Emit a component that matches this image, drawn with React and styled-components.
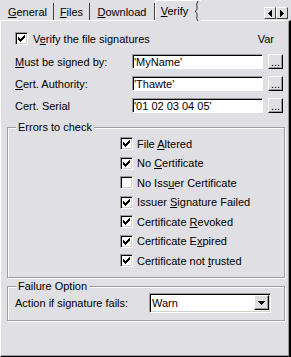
import React from 'react';
import styled, { createGlobalStyle } from 'styled-components';

const face = '#e0dfe3';
const shadow = '#9d9da1';

const GlobalStyle = createGlobalStyle`
  html, body {
    margin: 0;
    padding: 0;
    background: ${face};
  }
  body {
    font-family: "Liberation Sans", Arial, sans-serif;
    font-size: 11px;
    color: #000;
  }
`;

const Window = styled.div`
  width: 291px;
  height: 357px;
  display: flex;
  flex-direction: column;
  background: ${face};
`;

const TabBar = styled.div`
  position: relative;
  z-index: 1;
  display: flex;
  align-items: flex-end;
  height: 20px;
  padding: 0 3px 0 2px;
`;

const Tab = styled.div`
  box-sizing: border-box;
  width: ${p => p.$w}px;
  height: 17px;
  display: flex;
  align-items: center;
  justify-content: center;
  border-right: 1px solid #404040;
  line-height: 13px;
  padding-top: 2px;
`;

const ActiveTab = styled.div`
  box-sizing: border-box;
  width: ${p => p.$w}px;
  height: 21px;
  margin-bottom: -1px;
  display: flex;
  align-items: stretch;
  background: ${face};
  border-left: 1px solid #fff;
  border-top: 1px solid #fff;
`;

const ActiveLabel = styled.span`
  flex: 1;
  display: flex;
  align-items: center;
  justify-content: center;
  padding-bottom: 1px;
`;

const Scrollers = styled.div`
  display: flex;
  align-self: flex-start;
  margin: 7px 0 0 auto;
`;

const ScrollButton = styled.div`
  box-sizing: border-box;
  width: 12px;
  height: 12px;
  display: flex;
  align-items: center;
  justify-content: center;
  background: ${face};
  border: 1px solid;
  border-color: #fff #404040 #404040 #fff;
`;

const Panel = styled.div`
  flex: 1;
  box-sizing: border-box;
  display: flex;
  flex-direction: column;
  border-top: 1px solid #fff;
  border-left: 1px solid #fff;
  border-right: 2px solid #000;
  border-bottom: 1px solid #000;
  box-shadow: inset -1px -1px 0 ${shadow};
  padding: 11px 4px 0 6px;
`;

const HeaderRow = styled.div`
  display: flex;
  align-items: center;
  justify-content: space-between;
  height: 13px;
  margin-left: 8px;
  margin-right: 11px;
`;

const CheckRow = styled.div`
  display: flex;
  align-items: center;
  gap: ${p => p.$gap || 4}px;
  height: ${p => p.$h || 13}px;
  white-space: nowrap;
`;

const Box = styled.span`
  box-sizing: border-box;
  flex: none;
  width: 13px;
  height: 13px;
  display: flex;
  align-items: center;
  justify-content: center;
  background: #fff;
  border: 1px solid;
  border-color: ${shadow} #fff #fff ${shadow};
  box-shadow: inset 1px 1px 0 #000, inset -1px -1px 0 #d4d0c8;
`;

const Fields = styled.div`
  display: grid;
  grid-template-columns: 112px 131px 15px;
  grid-auto-rows: 15px;
  column-gap: 5px;
  row-gap: 7px;
  align-items: center;
  margin: 9px 0 0 8px;
`;

const FieldLabel = styled.span`
  white-space: nowrap;
`;

const TextBox = styled.input`
  box-sizing: border-box;
  width: 100%;
  height: 15px;
  margin: 0;
  padding: 0 0 0 1px;
  font: inherit;
  line-height: 12px;
  color: #000;
  background: #fff;
  border: 1px solid;
  border-color: ${shadow} #fff #fff ${shadow};
  box-shadow: inset 1px 1px 0 #000;
  outline: none;
`;

const DotsButton = styled.button`
  box-sizing: border-box;
  width: 15px;
  height: 15px;
  margin: 0;
  padding: 0 0 1px;
  display: flex;
  align-items: flex-end;
  justify-content: center;
  font: inherit;
  line-height: 9px;
  background: ${face};
  border: 1px solid;
  border-color: #fff #000 #000 #fff;
  box-shadow: inset -1px -1px 0 ${shadow};
`;

const Group = styled.fieldset`
  margin: ${p => p.$mt}px 0 0;
  padding: 0 0 ${p => p.$pb}px;
  min-width: 0;
  border: 1px solid ${shadow};
  box-shadow: inset 1px 1px 0 #fff, 1px 1px 0 #fff;
`;

const Legend = styled.legend`
  margin-left: 8px;
  padding: 0 2px;
  line-height: 13px;
  background: ${face};
`;

const CheckList = styled.div`
  display: flex;
  flex-direction: column;
  padding-left: 112px;
`;

const ActionRow = styled.div`
  display: grid;
  grid-template-columns: 134px 122px;
  align-items: center;
  height: 20px;
  padding-left: 7px;
`;

const Select = styled.div`
  box-sizing: border-box;
  height: 20px;
  display: flex;
  align-items: center;
  justify-content: space-between;
  padding: 0 1px;
  background: #fff;
  border: 1px solid;
  border-color: ${shadow} #fff #fff ${shadow};
  box-shadow: inset 1px 1px 0 #000, inset -1px -1px 0 #d4d0c8;
`;

const SelectValue = styled.span`
  padding-left: 1px;
`;

const DropButton = styled.span`
  box-sizing: border-box;
  width: 15px;
  height: 15px;
  display: flex;
  align-items: center;
  justify-content: center;
  background: ${face};
  border: 1px solid;
  border-color: #fff #000 #000 #fff;
  box-shadow: inset -1px -1px 0 ${shadow};
`;

const Check = ({ on }) => (
  <Box>
    {on && (
      <svg width="7" height="7" viewBox="0 0 7 7" shapeRendering="crispEdges">
        <path
          d="M0 2h1v3H0z M1 3h1v3H1z M2 4h1v3H2z M3 3h1v3H3z M4 2h1v3H4z M5 1h1v3H5z M6 0h1v3H6z"
          fill="#000"
        />
      </svg>
    )}
  </Box>
);

const Wave = () => (
  <svg width="8" height="20" viewBox="0 0 8 20">
    <path
      d="M5 0 Q3 3 4 6 Q5 9 2 10.5 Q5 12 4 15 Q3 18 5 20"
      fill="none"
      stroke="#303030"
      strokeWidth="1"
    />
  </svg>
);

const items = [
  { label: <>File <u>A</u>ltered</>, on: true },
  { label: <>No <u>C</u>ertificate</>, on: true },
  { label: <>No Iss<u>u</u>er Certificate</>, on: false },
  { label: <>Issuer <u>S</u>ignature Failed</>, on: true },
  { label: <>Certificate <u>R</u>evoked</>, on: true },
  { label: <>Certificate E<u>x</u>pired</>, on: true },
  { label: <>Certificate not <u>t</u>rusted</>, on: true },
];

const fields = [
  { label: <><u>M</u>ust be signed by:</>, value: "'MyName'" },
  { label: <><u>C</u>ert. Authority:</>, value: "'Thawte'" },
  { label: <>Cert. Serial</>, value: "'01 02 03 04 05'" },
];

export default function App() {
  return (
    <>
      <GlobalStyle />
      <Window>
        <TabBar>
          <Tab $w={52}><span><u>G</u>eneral</span></Tab>
          <Tab $w={36}><span><u>F</u>iles</span></Tab>
          <Tab $w={65}><span><u>D</u>ownload</span></Tab>
          <ActiveTab $w={46}>
            <ActiveLabel><span><u>V</u>erify</span></ActiveLabel>
            <Wave />
          </ActiveTab>
          <Scrollers>
            <ScrollButton>
              <svg width="4" height="7" viewBox="0 0 4 7" shapeRendering="crispEdges">
                <path d="M0 3h1v1H0z M1 2h1v3H1z M2 1h1v5H2z M3 0h1v7H3z" fill="#000" />
              </svg>
            </ScrollButton>
            <ScrollButton>
              <svg width="4" height="7" viewBox="0 0 4 7" shapeRendering="crispEdges">
                <path d="M0 0h1v7H0z M1 1h1v5H1z M2 2h1v3H2z M3 3h1v1H3z" fill="#000" />
              </svg>
            </ScrollButton>
          </Scrollers>
        </TabBar>

        <Panel>
          <HeaderRow>
            <CheckRow $gap={5}>
              <Check on />
              <span>V<u>e</u>rify the file signatures</span>
            </CheckRow>
            <span>Var</span>
          </HeaderRow>

          <Fields>
            {fields.map((f, i) => (
              <React.Fragment key={i}>
                <FieldLabel>{f.label}</FieldLabel>
                <TextBox readOnly value={f.value} />
                <DotsButton>...</DotsButton>
              </React.Fragment>
            ))}
          </Fields>

          <Group $mt={8} $pb={6}>
            <Legend>Errors to check</Legend>
            <CheckList>
              {items.map((it, i) => (
                <CheckRow key={i} $h={19.5}>
                  <Check on={it.on} />
                  <span>{it.label}</span>
                </CheckRow>
              ))}
            </CheckList>
          </Group>

          <Group $mt={2} $pb={7}>
            <Legend>Failure Option</Legend>
            <ActionRow>
              <span>Action if signature fails:</span>
              <Select>
                <SelectValue>Warn</SelectValue>
                <DropButton>
                  <svg width="7" height="4" viewBox="0 0 7 4" shapeRendering="crispEdges">
                    <path d="M0 0h7v1H0z M1 1h5v1H1z M2 2h3v1H2z M3 3h1v1H3z" fill="#000" />
                  </svg>
                </DropButton>
              </Select>
            </ActionRow>
          </Group>
        </Panel>
      </Window>
    </>
  );
}
